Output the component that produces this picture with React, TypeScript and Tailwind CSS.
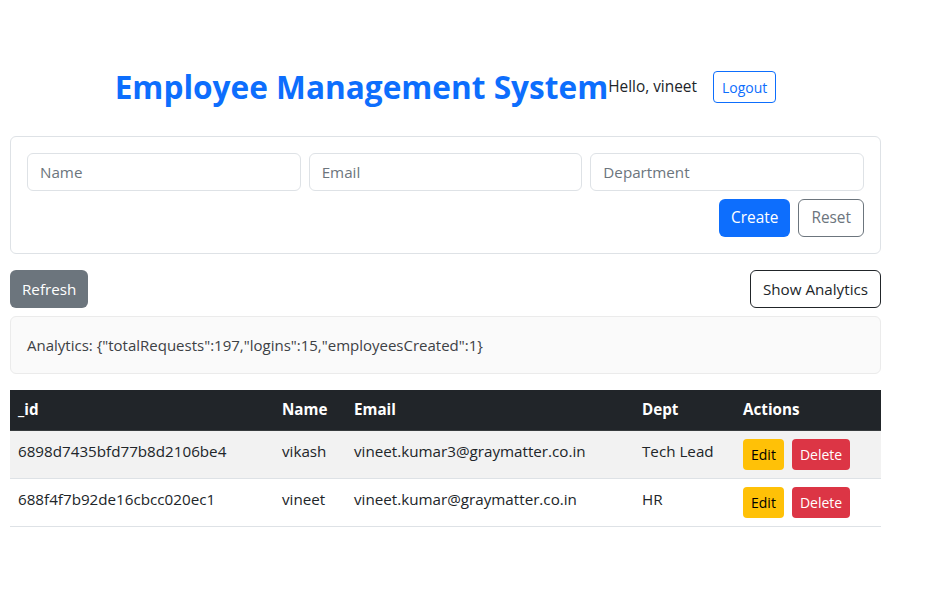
import { useState } from 'react';

interface Employee {
  _id: string;
  name: string;
  email: string;
  department: string;
}

const initial: Employee[] = [
  { _id: '6898d7435bfd77b8d2106be4', name: 'vikash', email: 'vineet.kumar3@graymatter.co.in', department: 'Tech Lead' },
  { _id: '688f4f7b92de16cbcc020ec1', name: 'vineet', email: 'vineet.kumar@graymatter.co.in', department: 'HR' },
];

export default function App() {
  const [employees] = useState<Employee[]>(initial);
  const [form, setForm] = useState({ name: '', email: '', department: '' });
  const [showAnalytics] = useState(true);

  const inputCls =
    'h-[38px] w-full rounded-[6px] border border-[#dee2e6] bg-white px-3 text-[15.2px] text-[#212529] placeholder:text-[#6c757d] focus:outline-none';

  return (
    <div className="min-h-screen bg-white text-[#212529]" style={{ fontFamily: '"Segoe UI", "Open Sans", "Noto Sans", sans-serif' }}>
      <div className="ml-[10px] w-[871px] pt-[63px]">
        {/* Header */}
        <div className="flex h-[48px] items-center justify-center">
          <h1 className="text-[31.6px] font-bold leading-[1.2] text-[#0d6efd]">Employee Management System</h1>
          <span className="text-[15.4px]">Hello, vineet</span>
          <button className="ml-4 h-[32px] rounded-[4px] border border-[#0d6efd] px-2 text-[14px] text-[#0d6efd]">Logout</button>
        </div>

        {/* Form */}
        <div className="mt-[25px] rounded-[6px] border border-[#dee2e6] p-4">
          <div className="grid grid-cols-3 gap-2">
            <input className={inputCls} placeholder="Name" value={form.name} onChange={e => setForm({ ...form, name: e.target.value })} />
            <input className={inputCls} placeholder="Email" value={form.email} onChange={e => setForm({ ...form, email: e.target.value })} />
            <input className={inputCls} placeholder="Department" value={form.department} onChange={e => setForm({ ...form, department: e.target.value })} />
          </div>
          <div className="mt-2 flex justify-end gap-2">
            <button className="h-[38px] rounded-[6px] bg-[#0d6efd] px-3 text-[15.4px] text-white">Create</button>
            <button className="h-[38px] rounded-[6px] border border-[#6c757d] px-3 text-[15.4px] text-[#6c757d]">Reset</button>
          </div>
        </div>

        {/* Toolbar */}
        <div className="mt-4 flex items-center justify-between">
          <button className="h-[38px] rounded-[6px] bg-[#6c757d] px-3 text-[15.2px] text-white">Refresh</button>
          <button className="h-[38px] rounded-[6px] border border-[#212529] px-3 text-[15.2px] text-[#212529]">Show Analytics</button>
        </div>

        {showAnalytics && (
          <div className="mt-2 flex h-[58px] items-center rounded-[6px] border border-[#ebebeb] bg-[#fafafa] px-4 text-[15px] text-[#3d4145]">
            Analytics: {'{"totalRequests":197,"logins":15,"employeesCreated":1}'}
          </div>
        )}

        {/* Table */}
        <table className="mt-4 w-full border-collapse text-left text-[15.2px]">
          <thead>
            <tr className="bg-[#212529] text-white">
              <th className="h-[40px] w-[264px] border-b border-[#373b3e] px-2 font-bold">_id</th>
              <th className="w-[72px] border-b border-[#373b3e] px-2 font-bold">Name</th>
              <th className="w-[288px] border-b border-[#373b3e] px-2 font-bold">Email</th>
              <th className="w-[101px] border-b border-[#373b3e] px-2 font-bold">Dept</th>
              <th className="border-b border-[#373b3e] px-2 font-bold">Actions</th>
            </tr>
          </thead>
          <tbody>
            {employees.map((emp, i) => (
              <tr key={emp._id} className={i % 2 === 0 ? 'bg-[#f2f2f2]' : 'bg-white'}>
                <td className="border-b border-[#dee2e6] p-2 align-top leading-6">{emp._id}</td>
                <td className="border-b border-[#dee2e6] p-2 align-top leading-6">{emp.name}</td>
                <td className="border-b border-[#dee2e6] p-2 align-top leading-6">{emp.email}</td>
                <td className="border-b border-[#dee2e6] p-2 align-top leading-6">{emp.department}</td>
                <td className="border-b border-[#dee2e6] p-2 align-top">
                  <div className="flex gap-2">
                    <button className="h-[31px] rounded-[4px] bg-[#ffc107] px-2 text-[14px] text-black">Edit</button>
                    <button className="h-[31px] rounded-[4px] bg-[#dc3545] px-2 text-[14px] text-white">Delete</button>
                  </div>
                </td>
              </tr>
            ))}
          </tbody>
        </table>
      </div>
    </div>
  );
}
